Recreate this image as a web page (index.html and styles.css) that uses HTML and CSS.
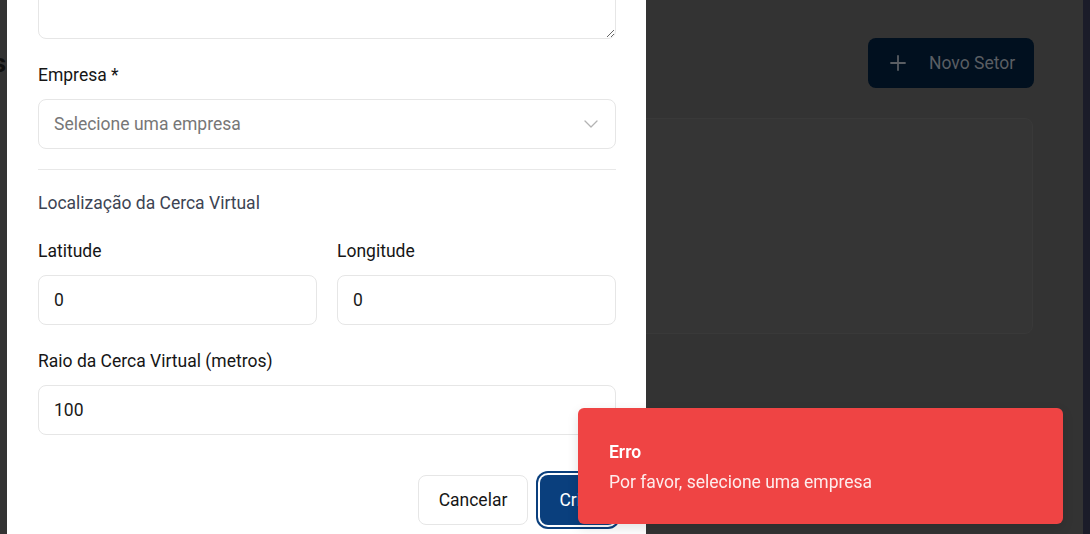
FILE: index.html
```html
<!DOCTYPE html>
<html lang="pt-BR">
<head>
<meta charset="utf-8">
<title>Setores</title>
<link rel="stylesheet" href="styles.css">
</head>
<body>
<div class="app">
  <main class="page">
    <header class="page-header">
      <div class="title-wrap"><h1 class="page-title">Gestão de Setores</h1></div>
      <button class="btn-new" type="button">
        <svg class="plus" width="24" height="24" viewBox="0 0 24 24" fill="none" stroke="currentColor" stroke-width="1.8" stroke-linecap="round"><path d="M5 12h14"/><path d="M12 5v14"/></svg>
        <span>Novo Setor</span>
      </button>
    </header>
    <section class="card"></section>
  </main>
  <div class="scrollbar"></div>
</div>

<div class="modal" role="dialog">
  <div class="modal-body">
    <textarea class="textarea"></textarea>

    <div class="field first">
      <label class="label">Empresa *</label>
      <div class="select">
        <span class="placeholder">Selecione uma empresa</span>
        <svg class="chev" width="24" height="24" viewBox="0 0 24 24" fill="none" stroke="currentColor" stroke-width="1.3" stroke-linecap="round" stroke-linejoin="round"><path d="m6 9 6 6 6-6"/></svg>
      </div>
    </div>

    <hr class="divider">

    <p class="section-title">Localização da Cerca Virtual</p>

    <div class="grid2">
      <div class="field">
        <label class="label">Latitude</label>
        <input class="input" type="text" value="0">
      </div>
      <div class="field">
        <label class="label">Longitude</label>
        <input class="input" type="text" value="0">
      </div>
    </div>

    <div class="field spaced">
      <label class="label">Raio da Cerca Virtual (metros)</label>
      <input class="input" type="text" value="100">
    </div>

    <div class="actions">
      <button class="btn btn-outline" type="button">Cancelar</button>
      <button class="btn btn-primary" type="button">Criar</button>
    </div>
  </div>
</div>

<div class="toast" role="alert">
  <div class="toast-title">Erro</div>
  <div class="toast-desc">Por favor, selecione uma empresa</div>
</div>
</body>
</html>
```

FILE: styles.css
```css
* { box-sizing: border-box; }

html, body {
  margin: 0;
  padding: 0;
  width: 1090px;
  height: 534px;
  overflow: hidden;
  font-family: Roboto, "Liberation Sans", Arial, sans-serif;
}

body { background: #333333; }

.app {
  display: flex;
  width: 1090px;
  height: 534px;
}

.page {
  flex: 1;
  padding: 38px 49px 0 0;
  display: flex;
  flex-direction: column;
}

.scrollbar {
  width: 7px;
  background: #1b1c29;
}

.page-header {
  display: flex;
  justify-content: space-between;
  align-items: center;
  height: 50px;
}

.title-wrap {
  width: 6px;
  display: flex;
  justify-content: flex-end;
}

.page-title {
  margin: 0;
  flex-shrink: 0;
  white-space: nowrap;
  font-size: 26px;
  font-weight: 700;
  color: #101010;
  line-height: 32px;
}

.btn-new {
  display: flex;
  align-items: center;
  gap: 19px;
  height: 50px;
  width: 166px;
  padding: 0 0 0 18px;
  border: none;
  border-radius: 8px;
  background: #01101f;
  color: #5a5e63;
  font-family: inherit;
  font-size: 17.5px;
}

.plus { flex-shrink: 0; }

.card {
  margin-top: 30px;
  height: 216px;
  margin-left: 200px;
  margin-right: 1px;
  background: #353535;
  border: 1px solid #393939;
  border-radius: 8px;
}

/* Modal */
.modal {
  position: fixed;
  top: 0;
  left: 7px;
  width: 639px;
  height: 534px;
  background: #ffffff;
  overflow: hidden;
}

.modal-body {
  padding: 0 30px 30px 31px;
  display: flex;
  flex-direction: column;
}

.textarea {
  display: block;
  width: 100%;
  height: 80px;
  margin-top: -41px;
  border: 1px solid #e6e6e6;
  border-radius: 8px;
  font-family: inherit;
  font-size: 17.5px;
  resize: vertical;
}

.field { display: flex; flex-direction: column; gap: 12px; }
.field.first { margin-top: 23px; }
.field.spaced { margin-top: 23px; }

.label {
  font-size: 17.5px;
  line-height: 24px;
  padding-top: 1px;
  color: #161616;
}

.select {
  height: 50px;
  border: 1px solid #e6e6e6;
  border-radius: 8px;
  display: flex;
  align-items: center;
  justify-content: space-between;
  padding: 0 12px 0 15px;
}

.placeholder {
  font-size: 17.5px;
  color: #777777;
}

.chev { color: #b3b3b3; }

.divider {
  margin: 20px 0 0 0;
  border: none;
  border-top: 1px solid #e8e8e8;
  height: 0;
}

.section-title {
  margin: 21px 0 0 0;
  font-size: 17.5px;
  line-height: 24px;
  color: #3d4453;
}

.grid2 {
  margin-top: 23px;
  display: grid;
  grid-template-columns: 1fr 1fr;
  column-gap: 20px;
}

.input {
  height: 50px;
  width: 100%;
  border: 1px solid #e6e6e6;
  border-radius: 8px;
  padding: 0 15px;
  font-family: inherit;
  font-size: 17.5px;
  color: #1a1a1a;
  background: #fff;
}

.actions {
  margin-top: 40px;
  display: flex;
  justify-content: flex-end;
  gap: 12px;
}

.btn {
  height: 50px;
  border-radius: 8px;
  font-family: inherit;
  font-size: 17.5px;
  padding: 0;
}

.btn-outline {
  width: 110px;
  background: #fff;
  border: 1px solid #e6e6e6;
  color: #161616;
}

.btn-primary {
  width: 76px;
  background: #0a3f7d;
  border: none;
  color: #ffffff;
  box-shadow: 0 0 0 2px #ffffff, 0 0 0 4px #0a3f7d;
}

/* Toast */
.toast {
  position: fixed;
  left: 578px;
  top: 408px;
  width: 485px;
  height: 116px;
  background: #ef4444;
  border-radius: 6px;
  padding: 33px 31px 32px 31px;
  box-shadow: 0 4px 12px rgba(0,0,0,0.12);
}

.toast-title {
  font-size: 17.5px;
  line-height: 22px;
  font-weight: 600;
  color: #ffffff;
}

.toast-desc {
  margin-top: 8px;
  font-size: 17.5px;
  line-height: 22px;
  color: rgba(255,255,255,0.9);
}
```
